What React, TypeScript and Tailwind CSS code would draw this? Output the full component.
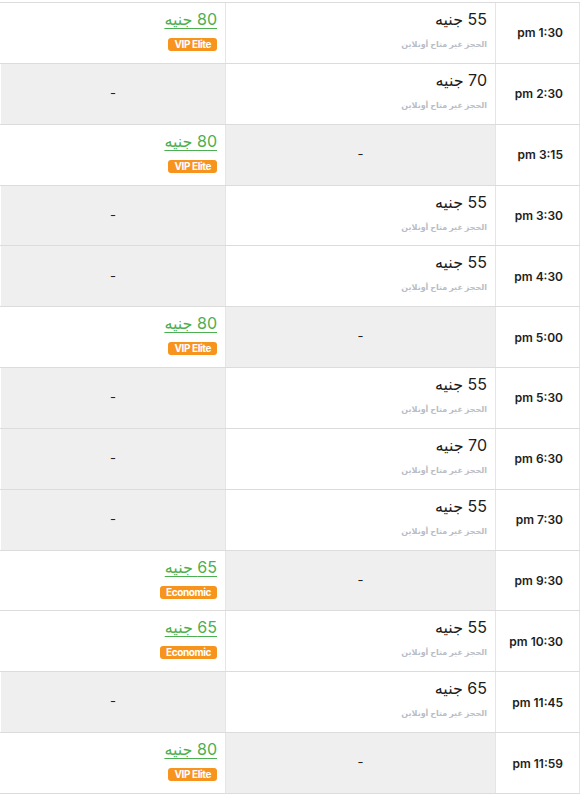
import React from 'react'

type Cell = { price: string; kind: 'online' | 'offline'; badge?: string } | null

interface Row {
  time: string
  standard: Cell
  special: Cell
}

const OFFLINE = 'الحجز غير متاح أونلاين'

const rows: Row[] = [
  { time: '1:30 pm', standard: { price: '55', kind: 'offline' }, special: { price: '80', kind: 'online', badge: 'VIP Elite' } },
  { time: '2:30 pm', standard: { price: '70', kind: 'offline' }, special: null },
  { time: '3:15 pm', standard: null, special: { price: '80', kind: 'online', badge: 'VIP Elite' } },
  { time: '3:30 pm', standard: { price: '55', kind: 'offline' }, special: null },
  { time: '4:30 pm', standard: { price: '55', kind: 'offline' }, special: null },
  { time: '5:00 pm', standard: null, special: { price: '80', kind: 'online', badge: 'VIP Elite' } },
  { time: '5:30 pm', standard: { price: '55', kind: 'offline' }, special: null },
  { time: '6:30 pm', standard: { price: '70', kind: 'offline' }, special: null },
  { time: '7:30 pm', standard: { price: '55', kind: 'offline' }, special: null },
  { time: '9:30 pm', standard: null, special: { price: '65', kind: 'online', badge: 'Economic' } },
  { time: '10:30 pm', standard: { price: '55', kind: 'offline' }, special: { price: '65', kind: 'online', badge: 'Economic' } },
  { time: '11:45 pm', standard: { price: '65', kind: 'offline' }, special: null },
  { time: '11:59 pm', standard: null, special: { price: '80', kind: 'online', badge: 'VIP Elite' } },
]

function PriceCell({ cell }: { cell: Cell }) {
  if (!cell) {
    return (
      <div className="flex h-full items-center justify-center bg-[#efefef] text-[13px] text-[#222]">-</div>
    )
  }
  return (
    <div className="flex h-full flex-col items-start bg-white pr-2 pt-[5px]">
      {cell.kind === 'online' ? (
        <a href="#" className="text-[16px] leading-[22px] text-[#4caf50] underline underline-offset-[3px] decoration-1">
          {cell.price} جنيه
        </a>
      ) : (
        <span className="text-[16px] leading-[22px] text-[#1d1d1d]">{cell.price} جنيه</span>
      )}
      {cell.kind === 'online' ? (
        <span
          dir="ltr"
          className="mt-[8px] rounded-[3px] bg-[#f7941d] px-[6px] text-[10px] font-bold leading-[13px] tracking-[-0.4px] text-white"
        >
          {cell.badge}
        </span>
      ) : (
        <span className="mt-[8px] text-[8px] font-bold leading-[12px] text-[#b9bdc6]">{OFFLINE}</span>
      )}
    </div>
  )
}

export default function App() {
  return (
    <div
      className="min-h-screen bg-white pt-[2px]"
      style={{ fontFamily: 'Inter, "DejaVu Sans", sans-serif' }}
    >
      <div dir="rtl" className="w-[580px] border-t border-[#dcdcdc]">
        {rows.map(r => (
          <div key={r.time} className="flex h-[60.85px] border-b border-[#dcdcdc]">
            <div className="flex w-[85px] shrink-0 items-center border-l border-r border-[#e1e6ec] pr-4 pt-[1px] text-[12px] font-semibold text-[#1d1d1d]">
              {r.time}
            </div>
            <div className="w-[270px] shrink-0 border-l border-[#e1e6ec]">
              <PriceCell cell={r.standard} />
            </div>
            <div className="w-[224px] shrink-0">
              <PriceCell cell={r.special} />
            </div>
          </div>
        ))}
      </div>
    </div>
  )
}
